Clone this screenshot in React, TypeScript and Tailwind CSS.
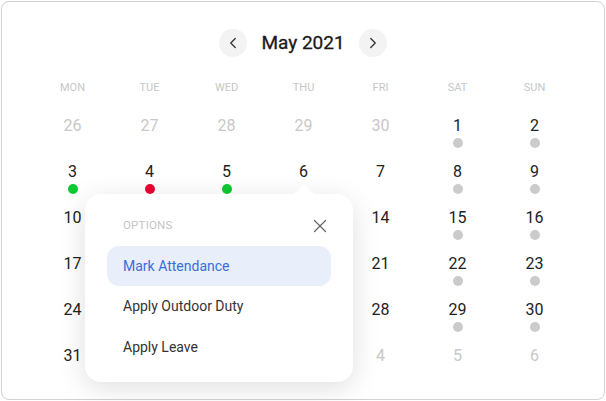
import { ChevronLeft, ChevronRight, X } from 'lucide-react';

type Day = { n: number; faded?: boolean; dot?: 'green' | 'red' | 'gray' };

const weekDays = ['MON', 'TUE', 'WED', 'THU', 'FRI', 'SAT', 'SUN'];

const days: Day[] = [
  { n: 26, faded: true }, { n: 27, faded: true }, { n: 28, faded: true }, { n: 29, faded: true }, { n: 30, faded: true }, { n: 1, dot: 'gray' }, { n: 2, dot: 'gray' },
  { n: 3, dot: 'green' }, { n: 4, dot: 'red' }, { n: 5, dot: 'green' }, { n: 6 }, { n: 7 }, { n: 8, dot: 'gray' }, { n: 9, dot: 'gray' },
  { n: 10 }, { n: 11 }, { n: 12 }, { n: 13 }, { n: 14 }, { n: 15, dot: 'gray' }, { n: 16, dot: 'gray' },
  { n: 17 }, { n: 18 }, { n: 19 }, { n: 20 }, { n: 21 }, { n: 22, dot: 'gray' }, { n: 23, dot: 'gray' },
  { n: 24 }, { n: 25 }, { n: 26 }, { n: 27 }, { n: 28 }, { n: 29, dot: 'gray' }, { n: 30, dot: 'gray' },
  { n: 31 }, { n: 1, faded: true }, { n: 2, faded: true }, { n: 3, faded: true }, { n: 4, faded: true }, { n: 5, faded: true }, { n: 6, faded: true },
];

const dotColor = {
  green: 'bg-[#0ccb31]',
  red: 'bg-[#ec0535]',
  gray: 'bg-[#cbcbcb]',
};

export default function App() {
  return (
    <div className="w-[606px] h-[401px] p-px bg-white" style={{ fontFamily: 'Roboto, "Liberation Sans", sans-serif' }}>
      <div className="relative w-[604px] h-[399px] border border-[#d2d2d2] rounded-lg bg-white">
        <div className="flex items-center justify-center gap-[14px] pt-[27px]">
          <button className="w-[28px] h-[28px] rounded-full bg-[#f3f3f3] flex items-center justify-center text-[#333]">
            <ChevronLeft size={18} strokeWidth={1.75} />
          </button>
          <span className="text-[19px] text-[#1a1a1a] leading-[28px] [-webkit-text-stroke:0.3px_#1a1a1a]">May 2021</span>
          <button className="w-[28px] h-[28px] rounded-full bg-[#f3f3f3] flex items-center justify-center text-[#333]">
            <ChevronRight size={18} strokeWidth={1.75} />
          </button>
        </div>

        <div className="ml-[32px] w-[539px] grid grid-cols-7 mt-[23px]">
          {weekDays.map(d => (
            <div key={d} className="text-center text-[11px] leading-[16px] text-[#c6c6c6]">{d}</div>
          ))}
        </div>

        <div className="ml-[32px] w-[539px] grid grid-cols-7 mt-[20px]">
          {days.map((d, i) => (
            <div key={i} className="h-[46px] flex flex-col items-center">
              <span className={`text-[16px] leading-[20px] ${d.faded ? 'text-[#c8c8c8]' : 'text-[#222]'}`}>{d.n}</span>
              {d.dot && <span className={`mt-[2px] w-[10px] h-[10px] rounded-full ${dotColor[d.dot]}`} />}
            </div>
          ))}
        </div>

        <div className="absolute left-[83px] top-[192px] w-[268px] h-[188px] bg-white rounded-2xl shadow-[0_6px_28px_rgba(0,0,0,0.13)] px-[22px] pt-[24px]">
          <div className="absolute left-[212px] top-[-7px] w-[14px] h-[14px] rotate-45 bg-white" />
          <div className="relative flex items-center justify-between pl-[16px] h-[16px] mb-[12px]">
            <span className="text-[11.5px] text-[#c4c4c4] tracking-[0.2px]">OPTIONS</span>
            <X size={22} strokeWidth={1.4} className="text-[#666]" />
          </div>
          <div className="relative h-[40px] rounded-xl bg-[#e8eefa] flex items-center pl-[16px] text-[14px] text-[#3a6ddb]">Mark Attendance</div>
          <div className="relative h-[41px] flex items-center pl-[16px] text-[14px] text-[#333]">Apply Outdoor Duty</div>
          <div className="relative h-[41px] flex items-center pl-[16px] text-[14px] text-[#333]">Apply Leave</div>
        </div>
      </div>
    </div>
  );
}
